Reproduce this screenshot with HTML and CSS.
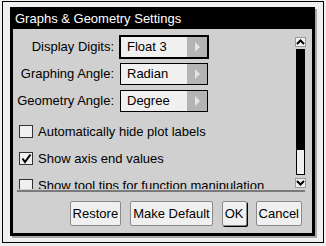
FILE: index.html
```html
<!DOCTYPE html>
<html lang="en">
<head>
  <meta charset="UTF-8" />
  <title>Graphs &amp; Geometry Settings</title>
  <link rel="stylesheet" href="styles.css">
</head>
<body>
  <div class="screen">
    <div class="dialog">
      <div class="title">Graphs &amp; Geometry Settings</div>
      <div class="body">
        <div class="scroll">
          <div class="fields">
            <div class="field">
              <label>Display Digits:</label>
              <div class="select focused"><span>Float 3</span><i class="arrow"></i></div>
            </div>
            <div class="field">
              <label>Graphing Angle:</label>
              <div class="select"><span>Radian</span><i class="arrow"></i></div>
            </div>
            <div class="field">
              <label>Geometry Angle:</label>
              <div class="select"><span>Degree</span><i class="arrow"></i></div>
            </div>

            <div class="check-row first"><span class="check"></span>Automatically hide plot labels</div>
            <div class="check-row">
              <span class="check">
                <svg width="11" height="11" viewBox="0 0 11 11"><polyline points="1.5,5.5 4,9 9.5,1.5" fill="none" stroke="#000" stroke-width="2"/></svg>
              </span>Show axis end values
            </div>
            <div class="check-row"><span class="check"></span>Show tool tips for function manipulation</div>
          </div>

          <div class="scrollbar">
            <div class="sb-btn">
              <svg width="9" height="8" viewBox="0 0 9 8"><polyline points="1,6 4.5,2.5 8,6" fill="none" stroke="#000" stroke-width="2"/></svg>
            </div>
            <div class="sb-track"><div class="sb-thumb"></div></div>
            <div class="sb-btn down">
              <svg width="9" height="8" viewBox="0 0 9 8"><polyline points="1,2 4.5,5.5 8,2" fill="none" stroke="#000" stroke-width="2"/></svg>
            </div>
          </div>
        </div>

        <div class="separator"></div>

        <div class="buttons">
          <button>Restore</button>
          <button>Make Default</button>
          <button class="default">OK</button>
          <button>Cancel</button>
        </div>
      </div>
    </div>
  </div>
</body>
</html>
```

FILE: styles.css
```css
html, body {
  margin: 0;
  background: #f0f0f0;
}
body {
  width: 326px;
  height: 246px;
  overflow: hidden;
  font-family: "Liberation Sans", Arial, sans-serif;
  font-size: 13px;
  color: #000;
}
.screen {
  margin: 1px 0 0 2px;
  width: 320px;
  height: 240px;
  border: 1px solid #000;
  background: #f0f0f0;
}
.dialog {
  box-sizing: border-box;
  margin: 5px 0 0 7px;
  width: 305px;
  height: 229px;
  border: 3px solid #000;
  background: #d0d0d0;
  box-shadow: 2px 2px 0 #a8a8a8;
  display: flex;
  flex-direction: column;
}
.title {
  height: 19px;
  line-height: 17px;
  padding-left: 2px;
  background: #000;
  color: #fff;
}
.body {
  flex: 1;
  display: flex;
  flex-direction: column;
}
.scroll {
  height: 160px;
  display: flex;
  overflow: hidden;
}
.fields {
  flex: 1;
  padding-top: 4px;
}
.field {
  height: 27px;
  display: grid;
  grid-template-columns: 101px 88px;
  gap: 6px;
  align-items: center;
}
.field label {
  text-align: right;
}
.select {
  box-sizing: border-box;
  height: 22px;
  border: 1px solid #000;
  background: #f0f0f0;
  display: flex;
  align-items: center;
}
.select.focused {
  box-shadow: 0 0 0 1px #000;
}
.select span {
  flex: 1;
  padding-left: 6px;
}
.arrow {
  width: 20px;
  height: 100%;
  background: #b4b4b4;
  display: flex;
  align-items: center;
  justify-content: center;
}
.arrow::before {
  content: "";
  border-left: 5px solid #e4e4e4;
  border-top: 5px solid transparent;
  border-bottom: 5px solid transparent;
}
.check-row {
  height: 27px;
  display: flex;
  align-items: center;
  gap: 5px;
  padding-left: 6px;
  white-space: nowrap;
}
.check-row.first {
  margin-top: 4px;
}
.check {
  box-sizing: border-box;
  width: 14px;
  height: 13px;
  border: 1px solid #333;
  background: #f0f0f0;
  display: flex;
  align-items: center;
  justify-content: center;
}
.scrollbar {
  width: 11px;
  margin: 8px 6px 0 0;
  display: flex;
  flex-direction: column;
}
.sb-btn {
  box-sizing: border-box;
  height: 10px;
  border: 1px solid #999;
  background: #f0f0f0;
  display: flex;
  align-items: center;
  justify-content: center;
}
.sb-btn.down {
  margin-top: 3px;
}
.sb-track {
  box-sizing: border-box;
  height: 126px;
  margin: 2px 1px 0 1px;
  border: 1px solid #000;
  background: #f0f0f0;
}
.sb-thumb {
  height: 100px;
  background: #000;
}
.separator {
  height: 2px;
  margin: 1px 7px 0 4px;
  background: #7a7a7a;
}
.buttons {
  display: flex;
  justify-content: flex-end;
  gap: 9px;
  padding: 9px 10px 0 0;
}
.buttons button {
  height: 25px;
  padding: 0 2px;
  border: 1px solid #8a8a8a;
  border-radius: 2px;
  background: #f0f0f0;
  font: inherit;
  color: #000;
}
.buttons button.default {
  box-shadow: 1px 1px 0 #000;
}
```
